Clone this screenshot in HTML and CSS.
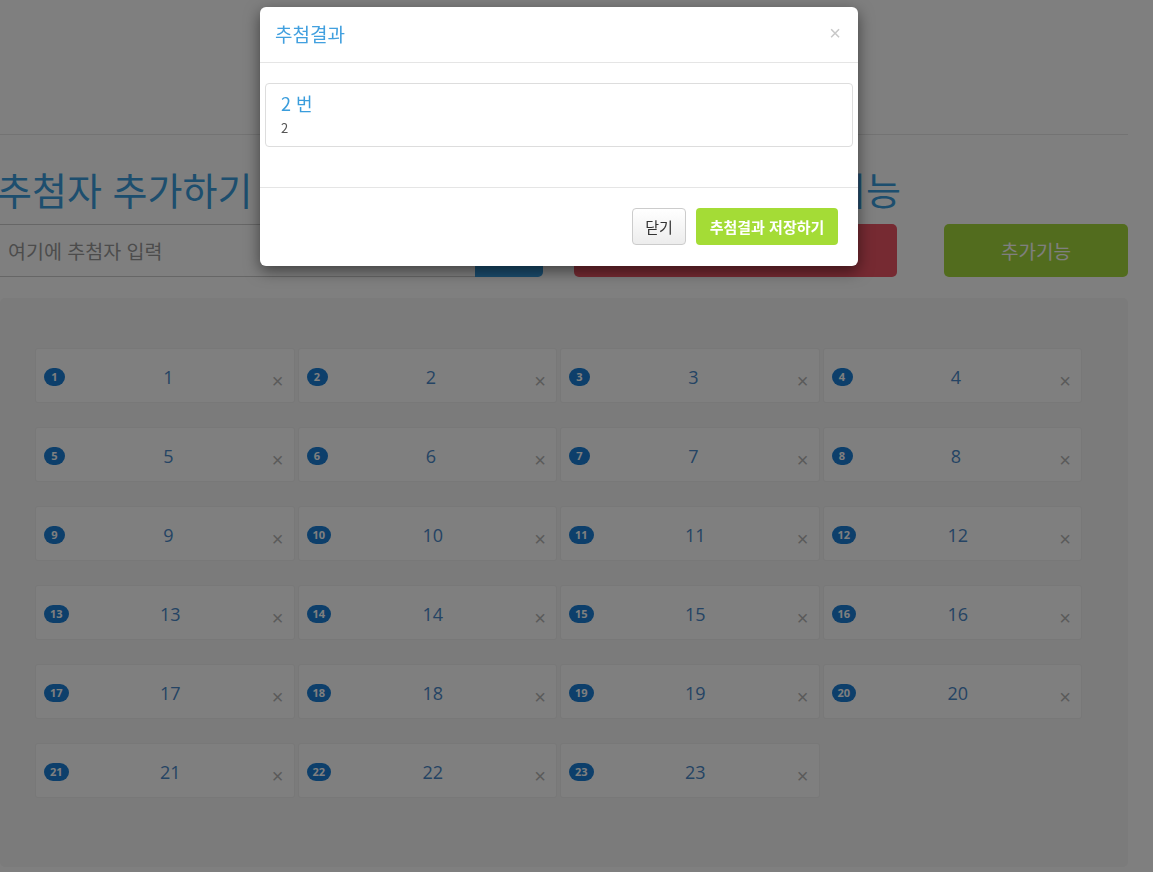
FILE: index.html
```html
<!DOCTYPE html>
<html lang="ko">
<head>
<meta charset="utf-8">
<title>추첨</title>
<link rel="stylesheet" href="styles.css">
</head>
<body>
<div class="page">
  <div class="top"></div>
  <div class="controls">
    <div class="col col-left">
      <h2 class="heading">추첨자 추가하기</h2>
      <div class="input-group">
        <input class="name-input" type="text" placeholder="여기에 추첨자 입력">
        <button class="btn-add">추가</button>
      </div>
    </div>
    <div class="col col-right">
      <h2 class="heading heading-right">추첨하기 및 추가기능</h2>
      <div class="btn-row">
        <button class="btn-draw">추첨하기</button>
        <button class="btn-extra">추가기능</button>
      </div>
    </div>
  </div>
  <div class="board">
    <div class="grid">
      <div class="item"><span class="badge">1</span><span class="name">1</span><span class="del">×</span></div>
      <div class="item"><span class="badge">2</span><span class="name">2</span><span class="del">×</span></div>
      <div class="item"><span class="badge">3</span><span class="name">3</span><span class="del">×</span></div>
      <div class="item"><span class="badge">4</span><span class="name">4</span><span class="del">×</span></div>
      <div class="item"><span class="badge">5</span><span class="name">5</span><span class="del">×</span></div>
      <div class="item"><span class="badge">6</span><span class="name">6</span><span class="del">×</span></div>
      <div class="item"><span class="badge">7</span><span class="name">7</span><span class="del">×</span></div>
      <div class="item"><span class="badge">8</span><span class="name">8</span><span class="del">×</span></div>
      <div class="item"><span class="badge">9</span><span class="name">9</span><span class="del">×</span></div>
      <div class="item"><span class="badge">10</span><span class="name">10</span><span class="del">×</span></div>
      <div class="item"><span class="badge">11</span><span class="name">11</span><span class="del">×</span></div>
      <div class="item"><span class="badge">12</span><span class="name">12</span><span class="del">×</span></div>
      <div class="item"><span class="badge">13</span><span class="name">13</span><span class="del">×</span></div>
      <div class="item"><span class="badge">14</span><span class="name">14</span><span class="del">×</span></div>
      <div class="item"><span class="badge">15</span><span class="name">15</span><span class="del">×</span></div>
      <div class="item"><span class="badge">16</span><span class="name">16</span><span class="del">×</span></div>
      <div class="item"><span class="badge">17</span><span class="name">17</span><span class="del">×</span></div>
      <div class="item"><span class="badge">18</span><span class="name">18</span><span class="del">×</span></div>
      <div class="item"><span class="badge">19</span><span class="name">19</span><span class="del">×</span></div>
      <div class="item"><span class="badge">20</span><span class="name">20</span><span class="del">×</span></div>
      <div class="item"><span class="badge">21</span><span class="name">21</span><span class="del">×</span></div>
      <div class="item"><span class="badge">22</span><span class="name">22</span><span class="del">×</span></div>
      <div class="item"><span class="badge">23</span><span class="name">23</span><span class="del">×</span></div>
    </div>
  </div>
</div>

<div class="backdrop"></div>
<div class="modal">
  <div class="modal-header">
    <h4 class="modal-title">추첨결과</h4>
    <span class="modal-close">×</span>
  </div>
  <div class="modal-body">
    <div class="result">
      <div class="result-title">2 번</div>
      <div class="result-text">2</div>
    </div>
  </div>
  <div class="modal-footer">
    <button class="btn-close">닫기</button>
    <button class="btn-save">추첨결과 저장하기</button>
  </div>
</div>
</body>
</html>
```

FILE: styles.css
```css
* { box-sizing: border-box; }
html, body { margin: 0; padding: 0; background: #fff; overflow: hidden; }
body {
  font-family: "Noto Sans CJK KR", "Noto Sans", sans-serif;
  font-size: 14px;
  color: #333;
  width: 1153px;
  height: 872px;
}
.page { width: 1128px; }
.top { height: 135px; border-bottom: 1px solid #e6e6e6; }

.controls { display: flex; gap: 31px; }
.col-left { width: 543px; }
.col-right { flex: 1; }
.heading {
  margin: 29px 0 11px -3px;
  font-size: 38px;
  font-weight: 400;
  line-height: 49px;
  color: #3a9ddc;
  white-space: nowrap;
}
.heading-right { margin-left: -9px; }
.input-group { display: flex; height: 53px; }
.name-input {
  width: 475px;
  border: 1px solid #ccc;
  border-left: 0;
  border-right: 0;
  font-family: inherit;
  font-size: 19.5px;
  padding: 0 8px;
  color: #555;
  outline: none;
}
.name-input::placeholder { color: #999; }
.btn-add {
  flex: 1;
  border: 0;
  background: #3498db;
  color: #fff;
  font-family: inherit;
  font-size: 19px;
  border-radius: 0 5px 5px 0;
}
.btn-row { display: flex; gap: 47px; height: 53px; }
.btn-draw {
  width: 323px;
  border: 0;
  border-radius: 5px;
  background: #ec5565;
  color: #fff;
  font-family: inherit;
  font-size: 19px;
}
.btn-extra {
  flex: 1;
  border: 0;
  border-radius: 5px;
  background: #a5d93c;
  color: #fff;
  font-family: inherit;
  font-size: 19px;
}

.board {
  margin-top: 21px;
  height: 569px;
  background: #f6f6f6;
  border-radius: 5px;
  padding: 50px 35px;
}
.grid {
  display: grid;
  grid-template-columns: repeat(4, 259.5px);
  column-gap: 3px;
  row-gap: 24px;
}
.item {
  display: flex;
  align-items: flex-start;
  height: 55px;
  background: #fff;
  border: 1px solid #f0f0f0;
  border-radius: 3px;
  padding: 0 10px 0 8px;
}
.badge {
  margin-top: 19px;
  min-width: 21px;
  height: 18px;
  padding: 0 6px;
  border-radius: 9px;
  background: #1a7fd6;
  color: #fff;
  font-family: "Open Sans", "Noto Sans", sans-serif;
  font-size: 11px;
  font-weight: 700;
  line-height: 18px;
  text-align: center;
}
.name {
  flex: 1;
  text-align: center;
  font-family: "Open Sans", "Noto Sans", sans-serif;
  font-size: 18px;
  line-height: 55px;
  color: #4a88c8;
  padding-top: 1px;
}
.del {
  margin-top: 22px;
  font-family: "Liberation Sans", Arial, sans-serif;
  font-size: 20px;
  line-height: 20px;
  color: #b5b5b5;
}

.backdrop {
  position: fixed;
  inset: 0;
  background: rgba(0, 0, 0, 0.5);
}
.modal {
  position: absolute;
  left: 260px;
  top: 7px;
  width: 598px;
  background: #fff;
  border-radius: 6px;
  box-shadow: 0 5px 15px rgba(0, 0, 0, 0.5);
}
.modal-header {
  display: flex;
  justify-content: space-between;
  align-items: center;
  height: 56px;
  padding: 0 17px 3px 15px;
  border-bottom: 1px solid #e5e5e5;
}
.modal-title {
  margin: 0;
  font-size: 19px;
  font-weight: 400;
  color: #42a0df;
}
.modal-close {
  font-family: "Liberation Sans", Arial, sans-serif;
  font-size: 20px;
  color: #c8c8c8;
  line-height: 1;
}
.modal-body { padding: 20px 5px 40px; }
.result {
  border: 1px solid #ddd;
  border-radius: 4px;
  padding: 7px 15px 9px;
  height: 64px;
}
.result-title { font-size: 18px; line-height: 24px; color: #3a9ddc; }
.result-text { font-size: 13px; line-height: 22px; color: #555; padding-top: 2px; }
.modal-footer {
  display: flex;
  justify-content: flex-end;
  gap: 10px;
  padding: 20px 20px 21px;
  border-top: 1px solid #e5e5e5;
}
.btn-close {
  height: 37px;
  width: 54px;
  border: 1px solid #ccc;
  border-radius: 4px;
  background: linear-gradient(#fff, #ededed);
  color: #333;
  font-family: inherit;
  font-size: 15px;
}
.btn-save {
  height: 37px;
  width: 142px;
  border: 0;
  border-radius: 4px;
  background: #a4dc36;
  color: #fff;
  font-family: inherit;
  font-size: 15px;
  font-weight: 700;
}
```
